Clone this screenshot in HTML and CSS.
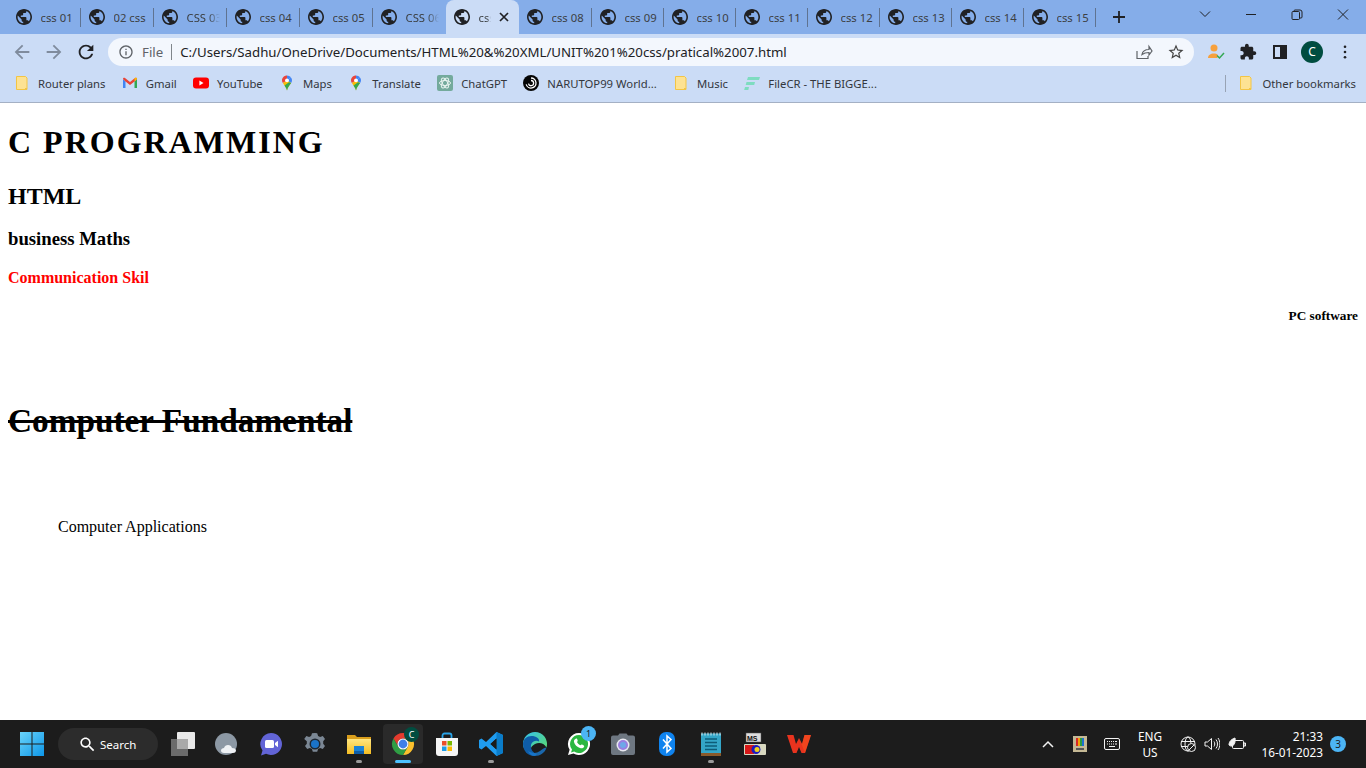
FILE: index.html
```html
<!DOCTYPE html>
<html lang="en">
<head>
  <meta charset="UTF-8">
  <title>pratical 07</title>
  <link rel="stylesheet" href="styles.css">
</head>
<body>
  <svg class="sprite" aria-hidden="true">
    <defs>
      <symbol id="globe" viewBox="2 2 20 20"><path d="M12 2C6.48 2 2 6.48 2 12s4.48 10 10 10 10-4.48 10-10S17.52 2 12 2zm-1 17.93c-3.95-.49-7-3.85-7-7.93 0-.62.08-1.21.21-1.79L9 15v1c0 1.1.9 2 2 2v1.93zm6.9-2.54c-.26-.81-1-1.39-1.9-1.39h-1v-3c0-.55-.45-1-1-1H8v-2h2c.55 0 1-.45 1-1V7h2c1.1 0 2-.9 2-2v-.41c2.93 1.19 5 4.06 5 7.41 0 2.08-.8 3.97-2.1 5.39z"/></symbol>
      <symbol id="folder" viewBox="0 0 16 16"><path d="M2.5 1.5h9l1.500 1.500v11.500h-10.500z" fill="#fde293" stroke="#f3c544"/><path d="M11 13h2v1.500h-2z" fill="#f3c544"/></symbol>
      <symbol id="pin" viewBox="0 0 16 16"><path d="M8 .5C5 .5 3 2.800 3 5.300c0 1.100.4 2 .9 2.800L8 5.500z" fill="#e8453c"/><path d="M8 .5c1.500 0 2.900.7 3.800 1.800L8 5.500z" fill="#4285f4"/><path d="M11.800 2.300c.7.8 1.200 1.900 1.200 3 0 1.100-.4 2-.9 2.800L8 5.500z" fill="#4285f4"/><path d="M3.900 8.100L8 5.500l4.100 2.600C10.800 10.300 8.800 12 8 15.500 7.500 13.500 6.500 12 5.500 10.500z" fill="#fbbc04"/><path d="M5.500 10.500L10 7.300l2.100.8C10.800 10.300 8.800 12 8 15.500 7.500 13.500 6.500 12 5.500 10.500z" fill="#34a853"/><circle cx="8" cy="5.300" r="1.900" fill="#fff"/></symbol>
      <linearGradient id="winBlue" x1="0" y1="0" x2="1" y2="1"><stop offset="0" stop-color="#6ad4fb"/><stop offset="1" stop-color="#0d96e8"/></linearGradient>
      <linearGradient id="folderYellow" x1="0" y1="0" x2="0" y2="1"><stop offset="0" stop-color="#ffe681"/><stop offset="1" stop-color="#f5bd22"/></linearGradient>
      <linearGradient id="edgeGreen" x1="0" y1="0" x2="1" y2="1"><stop offset="0" stop-color="#35c1f1"/><stop offset="1" stop-color="#5fdc5e"/></linearGradient>
    </defs>
  </svg>

  <header class="browser">
    <div class="tabstrip">
      <div class="tab"><svg class="favicon"><use href="#globe"/></svg><span class="tab-title">css 01</span></div>
      <div class="tab"><svg class="favicon"><use href="#globe"/></svg><span class="tab-title">02 css</span></div>
      <div class="tab"><svg class="favicon"><use href="#globe"/></svg><span class="tab-title fade">CSS 03</span></div>
      <div class="tab"><svg class="favicon"><use href="#globe"/></svg><span class="tab-title">css 04</span></div>
      <div class="tab"><svg class="favicon"><use href="#globe"/></svg><span class="tab-title">css 05</span></div>
      <div class="tab no-sep"><svg class="favicon"><use href="#globe"/></svg><span class="tab-title fade">CSS 06</span></div>
      <div class="tab active"><svg class="favicon"><use href="#globe"/></svg><span class="tab-title fade">css 07</span>
        <svg class="tab-close" viewBox="0 0 10 10"><path d="M1 1l8 8M9 1l-8 8"/></svg>
      </div>
      <div class="tab"><svg class="favicon"><use href="#globe"/></svg><span class="tab-title">css 08</span></div>
      <div class="tab tight"><svg class="favicon"><use href="#globe"/></svg><span class="tab-title">css 09</span></div>
      <div class="tab tight"><svg class="favicon"><use href="#globe"/></svg><span class="tab-title">css 10</span></div>
      <div class="tab tight"><svg class="favicon"><use href="#globe"/></svg><span class="tab-title">css 11</span></div>
      <div class="tab tight"><svg class="favicon"><use href="#globe"/></svg><span class="tab-title">css 12</span></div>
      <div class="tab tight"><svg class="favicon"><use href="#globe"/></svg><span class="tab-title">css 13</span></div>
      <div class="tab tight"><svg class="favicon"><use href="#globe"/></svg><span class="tab-title">css 14</span></div>
      <div class="tab tight"><svg class="favicon"><use href="#globe"/></svg><span class="tab-title">css 15</span></div>
      <svg class="new-tab" viewBox="0 0 12 12"><path d="M6 0v12M0 6h12"/></svg>
      <div class="window-controls">
        <svg class="win-btn" viewBox="0 0 46 30"><path d="M18 11.500l5 5 5-5"/></svg>
        <svg class="win-btn" viewBox="0 0 46 30"><path d="M18 14.500h10"/></svg>
        <svg class="win-btn" viewBox="0 0 46 30"><path d="M18 12.500a1 1 0 0 1 1-1h5.500a1 1 0 0 1 1 1v6a1 1 0 0 1-1 1H19a1 1 0 0 1-1-1zM20 11.500v-.5a1 1 0 0 1 1-1h5a2 2 0 0 1 2 2v5a1 1 0 0 1-1 1h-1.500"/></svg>
        <svg class="win-btn" viewBox="0 0 46 30"><path d="M18 9.500l10 10M28 9.500l-10 10"/></svg>
      </div>
    </div>

    <div class="toolbar">
      <svg class="nav-icon dim" viewBox="0 0 24 24"><path d="M20 11H7.830l5.590-5.590L12 4l-8 8 8 8 1.410-1.410L7.830 13H20v-2z"/></svg>
      <svg class="nav-icon dim" viewBox="0 0 24 24"><path d="M12 4l-1.410 1.410L16.170 11H4v2h12.170l-5.580 5.590L12 20l8-8z"/></svg>
      <svg class="nav-icon" viewBox="0 0 24 24"><path d="M17.650 6.350C16.200 4.900 14.210 4 12 4c-4.420 0-7.990 3.580-7.990 8s3.570 8 7.990 8c3.730 0 6.840-2.550 7.730-6h-2.080c-.82 2.330-3.040 4-5.650 4-3.310 0-6-2.690-6-6s2.690-6 6-6c1.660 0 3.140.69 4.220 1.780L13 11h7V4l-2.350 2.350z"/></svg>
      <div class="omnibox">
        <svg class="info-icon" viewBox="0 0 24 24"><path d="M11 7h2v2h-2zm0 4h2v6h-2zm1-9C6.480 2 2 6.480 2 12s4.480 10 10 10 10-4.480 10-10S17.520 2 12 2zm0 18c-4.410 0-8-3.590-8-8s3.590-8 8-8 8 3.590 8 8-3.590 8-8 8z"/></svg>
        <span class="scheme">File</span>
        <span class="url">C:/Users/Sadhu/OneDrive/Documents/HTML%20&amp;%20XML/UNIT%201%20css/pratical%2007.html</span>
        <svg class="omni-action" viewBox="0 0 18 18"><path d="M2 8v7.500h11V13M7 11.500c.5-3 3-5 7-5V3.500l3 4.500-3 4V9.500c-3 0-5 .5-7 2z" fill="none" stroke="#5f6368" stroke-width="1.200"/></svg>
        <svg class="omni-action star" viewBox="0 0 24 24"><path d="M22 9.240l-7.190-.62L12 2 9.190 8.630 2 9.240l5.460 4.730L5.820 21 12 17.270 18.180 21l-1.630-7.030L22 9.240zM12 15.400l-3.760 2.270 1-4.280-3.320-2.880 4.380-.38L12 6.100l1.710 4.040 4.380.38-3.320 2.880 1 4.280L12 15.400z"/></svg>
      </div>
      <div class="toolbar-right">
        <svg class="tool-icon" viewBox="0 0 18 18"><circle cx="7" cy="5" r="3.500" fill="#f7a13d"/><path d="M1 15c0-3 2.500-4.500 6-4.500 1.500 0 2.500.3 3.500.8V15z" fill="#f7a13d"/><path d="M10 12.500l2.500 2.500 4.500-5" fill="none" stroke="#34a853" stroke-width="1.500"/></svg>
        <svg class="tool-icon" viewBox="0 0 24 24"><path d="M20.500 11H19V7c0-1.100-.9-2-2-2h-4V3.500C13 2.120 11.880 1 10.500 1S8 2.120 8 3.500V5H4c-1.100 0-1.990.9-1.990 2v3.800H3.500c1.490 0 2.700 1.210 2.700 2.700s-1.210 2.700-2.700 2.700H2V20c0 1.100.9 2 2 2h3.800v-1.500c0-1.490 1.210-2.700 2.700-2.700 1.490 0 2.700 1.210 2.700 2.700V22H17c1.100 0 2-.9 2-2v-4h1.500c1.380 0 2.500-1.120 2.500-2.500S21.880 11 20.500 11z"/></svg>
        <svg class="tool-icon panel" viewBox="0 0 14 14"><path d="M0 0h14v14H0zM2 2v10h5V2z" fill-rule="evenodd"/></svg>
        <span class="avatar">C</span>
        <svg class="tool-icon menu" viewBox="0 0 4 16"><circle cx="2" cy="2" r="1.500"/><circle cx="2" cy="8" r="1.500"/><circle cx="2" cy="14" r="1.500"/></svg>
      </div>
    </div>

    <div class="bookmarks">
      <a class="bookmark"><svg class="bm-icon"><use href="#folder"/></svg>Router plans</a>
      <a class="bookmark"><svg class="bm-icon" viewBox="0 0 16 16"><path d="M1 4v9h2.500V6.500z" fill="#4285f4"/><path d="M15 4v9h-2.500V6.500z" fill="#34a853"/><path d="M1 4c0-1 1-1.500 2-1l5 4 5-4c1-.5 2 0 2 1l-2.500 2.500L8 10 3.500 6.500z" fill="#ea4335"/><path d="M12.500 3.300l.5-.3c1-.5 2 0 2 1l-2.500 2.500z" fill="#fbbc04"/></svg>Gmail</a>
      <a class="bookmark"><svg class="bm-icon" viewBox="0 0 16 16"><rect y="2.500" width="16" height="11" rx="3" fill="#f00"/><path d="M6.400 5.500v5L10.500 8z" fill="#fff"/></svg>YouTube</a>
      <a class="bookmark"><svg class="bm-icon"><use href="#pin"/></svg>Maps</a>
      <a class="bookmark"><svg class="bm-icon"><use href="#pin"/></svg>Translate</a>
      <a class="bookmark"><svg class="bm-icon" viewBox="0 0 16 16"><rect width="16" height="16" rx="2" fill="#74aa9c"/><g fill="none" stroke="#e6f2ee" stroke-width="1"><ellipse cx="8" cy="8" rx="5.500" ry="2.500"/><ellipse cx="8" cy="8" rx="5.500" ry="2.500" transform="rotate(60 8 8)"/><ellipse cx="8" cy="8" rx="5.500" ry="2.500" transform="rotate(120 8 8)"/></g></svg>ChatGPT</a>
      <a class="bookmark"><svg class="bm-icon" viewBox="0 0 16 16"><circle cx="8" cy="8" r="8" fill="#050505"/><path d="M8 3a5 5 0 1 1-4.800 6.400M8 5.500A2.600 2.600 0 1 1 5.500 8.700" fill="none" stroke="#fff" stroke-width="1.300"/></svg>NARUTOP99 World...</a>
      <a class="bookmark"><svg class="bm-icon"><use href="#folder"/></svg>Music</a>
      <a class="bookmark"><svg class="bm-icon" viewBox="0 0 16 16"><path d="M4 2h12l-1 3H3zM2.500 7H11l-.8 3H1.700zM1 12h4l-.7 3H.2z" fill="#7edcc0"/></svg>FileCR - THE BIGGE...</a>
      <span class="bm-sep"></span>
      <a class="bookmark other"><svg class="bm-icon"><use href="#folder"/></svg>Other bookmarks</a>
    </div>
  </header>

  <main class="page">
    <h1 class="spaced">C PROGRAMMING</h1>
    <h2 class="subject">HTML</h2>
    <h3 class="subject">business Maths</h3>
    <h4 class="subject red">Communication Skil</h4>
    <h5 class="subject right">PC software</h5>
    <h1 class="struck">Computer Fundamental</h1>
    <p class="indented">Computer Applications</p>
  </main>

  <footer class="taskbar">
    <svg class="start" viewBox="0 0 24 24"><path fill="url(#winBlue)" d="M0 0h11.500v11.500H0zM12.500 0H24v11.500H12.500zM0 12.500h11.500V24H0zM12.500 12.500H24V24H12.500z"/></svg>
    <div class="search-pill">
      <svg class="search-icon" viewBox="0 0 24 24"><path d="M15.500 14h-.79l-.28-.27C15.410 12.590 16 11.110 16 9.500 16 5.910 13.090 3 9.500 3S3 5.910 3 9.500 5.910 16 9.500 16c1.610 0 3.090-.59 4.230-1.570l.27.28v.79l5 4.990L20.490 19l-4.990-5zm-6 0C7.010 14 5 11.990 5 9.500S7.010 5 9.500 5 14 7.010 14 9.500 11.990 14 9.500 14z"/></svg>
      Search
    </div>
    <div class="apps">
      <div class="app"><svg viewBox="0 0 24 24"><rect x="0" y="7" width="17" height="17" fill="#6b6b6b"/><rect x="6" y="0" width="18" height="17" rx="1" fill="#e9e9e9"/><rect x="6" y="7" width="11" height="10" fill="#a9a9a9"/></svg></div>
      <div class="app"><svg viewBox="0 0 24 24"><circle cx="11" cy="12" r="11" fill="#8c98a4"/><path d="M9 21c-2 0-3-1-3-2.500S7.500 16 9 16c.5-2 2.200-3 4-3 2 0 3.500 1 4 3 2 0 4 .8 4 2.500S19.500 21 18 21z" fill="#eef1f4"/></svg></div>
      <div class="app"><svg viewBox="0 0 24 24"><path d="M12 1a11 11 0 1 1-5 20.800L2 23.500l1.500-5A11 11 0 0 1 12 1z" fill="#6264d6"/><rect x="6" y="8" width="9" height="8" rx="1.500" fill="#fff"/><path d="M16 11l3-2.200v6.400L16 13z" fill="#fff"/></svg></div>
      <div class="app"><svg viewBox="0 0 24 24"><path d="M12 1l2.200.3.9 2.700 2 1 2.700-.9 2.200 3-1.800 2.200v2.400l1.800 2.200-2.200 3-2.700-.9-2 1-.9 2.700h-4.400l-.9-2.700-2-1-2.700.9-2.200-3 1.800-2.200V9.300L1.200 7.100l2.200-3 2.700.9 2-1 .9-2.700z" fill="#7b8794"/><circle cx="12" cy="12" r="5.500" fill="#1d2733"/><circle cx="12" cy="12" r="4" fill="#1a73c9"/></svg></div>
      <div class="app running"><svg viewBox="0 0 24 24"><path d="M0 3h8l2 2h14v17H0z" fill="#d99e1c"/><path d="M0 7h24v15H0z" fill="url(#folderYellow)"/><rect x="7" y="14" width="10" height="7" fill="#1a82d6"/><rect x="7" y="19" width="10" height="3" fill="#0f5ea8"/></svg></div>
      <div class="app current">
        <svg viewBox="0 0 24 24"><path d="M12 1A11 11 0 0 1 21.530 6.500H12A5.500 5.500 0 0 0 7.240 14.750L2.470 6.500A11 11 0 0 1 12 1z" fill="#e33b2e"/><path d="M21.530 6.500H12A5.500 5.500 0 0 1 16.760 14.750L12 23A11 11 0 0 0 21.530 6.500z" fill="#fbc02d"/><path d="M2.470 6.500L7.240 14.750A5.500 5.500 0 0 0 16.760 14.750L12 23A11 11 0 0 1 2.470 6.500z" fill="#2f9e44"/><circle cx="12" cy="12" r="5.500" fill="#fff"/><circle cx="12" cy="12" r="4.400" fill="#3f7fe8"/></svg>
        <span class="app-badge green">C</span>
      </div>
      <div class="app"><svg viewBox="0 0 24 24"><path d="M7.500 7V3.500a2 2 0 0 1 2-2h5a2 2 0 0 1 2 2V7" fill="none" stroke="#2aa4e8" stroke-width="1.800"/><path d="M1 6h22v15a3 3 0 0 1-3 3H4a3 3 0 0 1-3-3z" fill="#f5f5f5"/><path d="M7 9h4.500v4.500H7z" fill="#ea4e2a"/><path d="M12.500 9H17v4.500h-4.500z" fill="#7ab800"/><path d="M7 14.500h4.500V19H7z" fill="#1c9be6"/><path d="M12.500 14.500H17V19h-4.500z" fill="#fdb900"/></svg></div>
      <div class="app running"><svg viewBox="0 0 24 24"><path d="M17.500 0L24 3v18l-6.500 3L7 14l-4.500 3.500L0 16V8l2.500-1.500L7 10zM17.500 6.500L11.500 12l6 5.500z" fill="#1f9cf0"/><path d="M17.500 0L24 3v18l-6.500 3z" fill="#0a7cc9"/><path d="M17.500 6.500L11.500 12l6 5.500z" fill="#1b1b1b"/></svg></div>
      <div class="app"><svg viewBox="0 0 24 24"><path d="M12 0a12 12 0 0 1 11.500 15.500C21 11 16 10 12 12s-6 6-3 10C3 20 0 16.500 0 12A12 12 0 0 1 12 0z" fill="url(#edgeGreen)"/><path d="M0 12c0-5 4-8 8.500-8S17 6.500 16 9.500C13.500 8 9 9 8 13c-.7 4 2 8 6 9-1 .7-1.500 2-3 2C5 24 0 19 0 12z" fill="#0f5da8"/><path d="M23.500 15.500C22 21 17 24 12 24c-3 0-6-2-7-5 3 2 8 3 12 0 2-1.500 3-3 6.500-3.500z" fill="#1a7bd0" opacity=".8"/></svg></div>
      <div class="app"><svg viewBox="0 0 24 24"><path d="M12 1a11 11 0 1 1-5.500 20.500L1 23l1.600-5.300A11 11 0 0 1 12 1z" fill="#fff"/><path d="M12 3a9 9 0 1 1-4.800 16.600l-3.200.9 1-3A9 9 0 0 1 12 3z" fill="#2bb741"/><path d="M8.500 7c1-.8 1.500-.3 2 1 .4 1 .2 1.300-.5 2 .7 1.500 2 2.700 3.500 3.300.8-1 1.200-1.100 2-.6 1.500.9 2 1.200 1.500 2.200-.7 1.300-2.300 1.800-4 1.200-3-1-5.300-3-6-6-.2-1.300.2-2.400 1.500-3.100z" fill="#fff"/></svg>
        <span class="app-badge blue">1</span>
      </div>
      <div class="app"><svg viewBox="0 0 24 24"><path d="M7 3.500l1.500-2h7l1.500 2h5a2 2 0 0 1 2 2V21a2 2 0 0 1-2 2H2a2 2 0 0 1-2-2V5.500a2 2 0 0 1 2-2z" fill="#6e7781"/><circle cx="12" cy="13" r="6.500" fill="#e8e8f0"/><circle cx="12" cy="13" r="5" fill="#9a7ee0"/><circle cx="12" cy="13" r="3" fill="#6ea8e8"/></svg></div>
      <div class="app"><svg viewBox="0 0 24 24"><rect x="4" y="0" width="16" height="24" rx="7" fill="#0f83ee"/><path d="M8 7.500l8 9-4 3.500V4l4 3.500-8 9" fill="none" stroke="#fff" stroke-width="1.500"/></svg></div>
      <div class="app running"><svg viewBox="0 0 24 24"><rect x="2" y="1.500" width="20" height="22" fill="#34a6c8"/><rect x="2" y="21" width="20" height="3" fill="#8a5a2b"/><path d="M3 .5v3M6 .5v3M9 .5v3M12 .5v3M15 .5v3M18 .5v3M21 .5v3" stroke="#d6e9f0" stroke-width="1"/><path d="M6 7h12M6 10.500h12M6 14h12M6 17.500h12" stroke="#0d5c78" stroke-width="1.500"/></svg></div>
      <div class="app"><svg viewBox="0 0 24 24"><rect x="3" y="1" width="15" height="9" fill="#ddd" stroke="#555" stroke-width=".5"/><text class="ms-text" x="4" y="8.500">MS</text><rect x="1" y="12" width="22" height="11" rx="1" fill="#d8d8c0"/><rect x="2" y="13" width="9" height="9" fill="#d81818"/><circle cx="13" cy="17.500" r="4.500" fill="#1a1ac0"/><circle cx="14" cy="17.500" r="2.500" fill="#f2d21a"/></svg></div>
      <div class="app"><svg viewBox="0 0 24 24"><path d="M0 3h6.500l2.500 9 3-6 3 6 2.500-9H24l-6 18h-3.500L12 15l-2.500 6H6z" fill="#e8331e"/><path d="M12 6l3 6 2.500-9H24l-6 18z" fill="#f4511e" opacity=".6"/></svg></div>
    </div>
    <div class="tray">
      <svg class="tray-icon chevron" viewBox="0 0 12 8"><path d="M1 7l5-5 5 5"/></svg>
      <svg class="tray-icon" viewBox="0 0 14 16"><rect width="14" height="16" fill="#c4b894"/><path d="M3 2h2v8H3z" fill="#d62828"/><path d="M5 2h2v8H5z" fill="#f1a208"/><path d="M7 2h2v8H7z" fill="#2a9d3f"/><path d="M9 2h2v8H9z" fill="#1d6fd1"/><path d="M3 12h8v2H3z" fill="#555"/></svg>
      <svg class="tray-icon kbd" viewBox="0 0 16 12"><rect x=".5" y=".5" width="15" height="11" rx="1.500" fill="none" stroke="#f2f2f2"/><path d="M3 3.500h1M5 3.500h1M7 3.500h1M9 3.500h1M11 3.500h2M3 6h1M5 6h1M7 6h1M9 6h1M11 6h2M5 8.500h6" stroke="#f2f2f2"/></svg>
      <div class="lang">ENG<br>US</div>
      <div class="tray-group">
        <svg class="tray-line" viewBox="0 0 16 16"><circle cx="8" cy="8" r="7"/><ellipse cx="8" cy="8" rx="3" ry="7"/><path d="M1 5.500h14M1 10.500h14"/><circle cx="11.500" cy="11.500" r="4" fill="#1c1c1c"/><path d="M9 14l5-5"/></svg>
        <svg class="tray-line" viewBox="0 0 16 16"><path d="M1 6v4h2.500L7.500 13.500v-11L3.500 6zM10 5.500c1 1.500 1 3.500 0 5M12 3.500c2 2.500 2 6.500 0 9M14 2c2.500 3.500 2.500 8.500 0 12"/></svg>
        <svg class="tray-line filled" viewBox="0 0 18 16"><rect x="4.500" y="4.500" width="11" height="8" rx="1"/><path d="M16 7v3h1.500V7z"/><path class="leaf" d="M1 9c0-4 3-6 6-7 .5 3 0 7-3 8-1 .2-2 0-3-1z"/></svg>
      </div>
      <div class="clock">21:33<br>16-01-2023</div>
      <span class="notify">3</span>
    </div>
  </footer>
</body>
</html>
```

FILE: styles.css
```css
* {
  box-sizing: border-box;
}

html, body {
  height: 100%;
}

body {
  margin: 0;
  display: flex;
  flex-direction: column;
  overflow: hidden;
  background-color: #fff;
  font-family: "Liberation Serif", serif;
}

.sprite {
  display: block;
  width: 0;
  height: 0;
  flex: none;
}

/* browser chrome */
.browser {
  flex: none;
  font-family: "Noto Sans", sans-serif;
  font-size: 11.3px;
  color: #3c4043;
}

.tabstrip {
  display: flex;
  align-items: center;
  height: 34px;
  padding-left: 8px;
  background-color: #85ade9;
}

.tab {
  position: relative;
  display: flex;
  align-items: center;
  flex: none;
  width: 73px;
  height: 34px;
  padding: 0 7px 0 8px;
  gap: 8.5px;
}

.tab.tight {
  width: 72px;
}

.tab::after {
  content: "";
  position: absolute;
  right: 0;
  top: 8px;
  height: 19px;
  width: 1px;
  background-color: #5f7391;
}

.tab.no-sep::after,
.tab.active::after {
  display: none;
}

.tab.active {
  background-color: #cbdcf6;
  border-radius: 8px 8px 0 0;
  padding-right: 8px;
}

.favicon {
  flex: none;
  width: 16px;
  height: 16px;
  fill: #202124;
}

.tab-title {
  flex: 1;
  min-width: 0;
  overflow: hidden;
  white-space: nowrap;
}

.tab-title.fade {
  -webkit-mask-image: linear-gradient(to right, #000 65%, transparent);
  mask-image: linear-gradient(to right, #000 65%, transparent);
}

.tab-close {
  flex: none;
  width: 10px;
  height: 10px;
  margin-right: 2px;
  fill: none;
  stroke: #202124;
  stroke-width: 1.700;
}

.new-tab {
  flex: none;
  width: 12px;
  height: 12px;
  margin-left: 17px;
  fill: none;
  stroke: #202124;
  stroke-width: 1.800;
}

.window-controls {
  display: flex;
  margin-left: auto;
  align-self: flex-start;
}

.win-btn {
  width: 46px;
  height: 30px;
  fill: none;
  stroke: #202124;
  stroke-width: 1;
}

.toolbar {
  display: flex;
  align-items: center;
  height: 35px;
  padding: 1px 0 0 11px;
  background-color: #cbdcf6;
}

.nav-icon {
  flex: none;
  width: 22px;
  height: 22px;
  margin-right: 10px;
  fill: #202124;
}

.nav-icon.dim {
  fill: #7f8b9d;
}

.omnibox {
  display: flex;
  align-items: center;
  flex: none;
  width: 1086px;
  height: 28px;
  margin-left: 1px;
  padding: 0 9px 0 10px;
  border-radius: 14px;
  background-color: #f3f7fd;
  font-size: 13.25px;
}

.info-icon {
  flex: none;
  width: 16px;
  height: 16px;
  fill: #5f6368;
}

.scheme {
  margin-left: 8px;
  padding-right: 8px;
  border-right: 1px solid #80868b;
  line-height: 16px;
  color: #5f6368;
}

.url {
  flex: 1;
  margin-left: 8px;
  color: #202124;
  white-space: nowrap;
}

.omni-action {
  flex: none;
  width: 18px;
  height: 18px;
  margin-left: 14px;
}

.omni-action.star {
  fill: #444;
}

.toolbar-right {
  display: flex;
  align-items: center;
  flex: 1;
  padding-left: 6px;
}

.tool-icon {
  flex: none;
  width: 18px;
  height: 18px;
  margin: 0 7px;
  fill: #202124;
}

.tool-icon.panel {
  width: 14px;
  height: 14px;
  margin: 0 9px;
}

.tool-icon.menu {
  width: 4px;
  height: 14px;
  margin: 0 0 0 15px;
}

.avatar {
  flex: none;
  width: 22px;
  height: 22px;
  margin: 0 5px;
  border-radius: 50%;
  background-color: #004d40;
  color: #fff;
  font-size: 12px;
  line-height: 22px;
  text-align: center;
}

.bookmarks {
  display: flex;
  align-items: center;
  height: 34px;
  padding: 0 10px 5px 14px;
  gap: 16.3px;
  background-color: #cbdcf6;
  border-bottom: 1px solid #a4b0c4;
}

.bookmark {
  display: flex;
  align-items: center;
  gap: 8px;
  white-space: nowrap;
  color: #33373d;
}

.bm-icon {
  flex: none;
  width: 16px;
  height: 16px;
}

.bm-sep {
  width: 1px;
  height: 17px;
  margin-left: auto;
  background-color: #98a3b4;
}

.bookmark.other {
  margin-left: -4px;
}

/* page content */
.page {
  flex: 1;
  min-height: 0;
  padding: 0 8px;
  color: #000;
}

.spaced {
  letter-spacing: 2px;
}

.subject {
  margin: 18px 0;
}

.red {
  margin-top: 19px;
  color: #f00;
}

.right {
  margin-top: 21px;
  text-align: right;
}

.struck {
  margin: 78px 0 0;
  font-size: 33.3px;
  text-decoration: line-through;
}

.indented {
  margin: 78px 0 0 50px;
}

/* windows taskbar */
.taskbar {
  display: flex;
  align-items: center;
  flex: none;
  height: 48px;
  padding-left: 20px;
  background-color: #1c1c1c;
  font-family: "Noto Sans", sans-serif;
  color: #fff;
}

.start {
  flex: none;
  width: 24px;
  height: 24px;
}

.search-pill {
  display: flex;
  align-items: center;
  flex: none;
  width: 100px;
  height: 32px;
  margin-left: 14px;
  padding-left: 20px;
  gap: 3px;
  border-radius: 16px;
  background-color: #2c2c2c;
  font-size: 11.5px;
}

.search-icon {
  width: 19px;
  height: 19px;
  fill: #fff;
}

.apps {
  display: flex;
  margin-left: 3px;
}

.app {
  position: relative;
  display: flex;
  align-items: center;
  justify-content: center;
  width: 44px;
  height: 40px;
}

.app svg {
  width: 24px;
  height: 24px;
}

.app.running::after,
.app.current::after {
  content: "";
  position: absolute;
  left: 50%;
  bottom: 1px;
  width: 6px;
  height: 3px;
  margin-left: -3px;
  border-radius: 2px;
  background-color: #9a9a9a;
}

.app.current {
  width: 40px;
  margin: 0 2px;
  border-radius: 4px;
  background-color: #2a2a2a;
}

.app.current::after {
  width: 16px;
  margin-left: -8px;
  background-color: #4cc2ff;
}

.app-badge {
  position: absolute;
  top: 3px;
  right: 4px;
  width: 15px;
  height: 15px;
  border-radius: 50%;
  font-size: 9px;
  line-height: 15px;
  text-align: center;
}

.app-badge.green {
  background-color: #004d40;
}

.app-badge.blue {
  top: 2px;
  right: 5px;
  background-color: #4cb5f5;
  color: #1c1c1c;
}

.ms-text {
  font-family: "Liberation Sans", sans-serif;
  font-size: 7px;
  font-weight: bold;
  fill: #111;
}

.tray {
  display: flex;
  align-items: center;
  margin-left: auto;
  padding-right: 20px;
  font-size: 11.8px;
}

.tray-icon {
  flex: none;
  width: 14px;
  height: 16px;
  margin-right: 17px;
}

.tray-icon.chevron {
  width: 12px;
  height: 8px;
  margin-right: 19px;
  fill: none;
  stroke: #f2f2f2;
  stroke-width: 1.5;
}

.tray-icon.kbd {
  width: 16px;
  height: 12px;
  margin-right: 15px;
}

.lang {
  width: 30px;
  line-height: 16px;
  text-align: center;
}

.tray-group {
  display: flex;
  align-items: center;
  margin-left: 15px;
  gap: 8px;
}

.tray-line {
  width: 16px;
  height: 16px;
  fill: none;
  stroke: #f2f2f2;
  stroke-width: 1;
}

.tray-line.filled {
  width: 18px;
}

.leaf {
  fill: #f2f2f2;
}

.clock {
  width: 66px;
  margin-left: 11px;
  line-height: 16px;
  text-align: right;
}

.notify {
  flex: none;
  width: 16px;
  height: 16px;
  margin-left: 7px;
  border-radius: 50%;
  background-color: #4cb5f5;
  color: #1c1c1c;
  font-size: 10px;
  line-height: 16px;
  text-align: center;
}
```
